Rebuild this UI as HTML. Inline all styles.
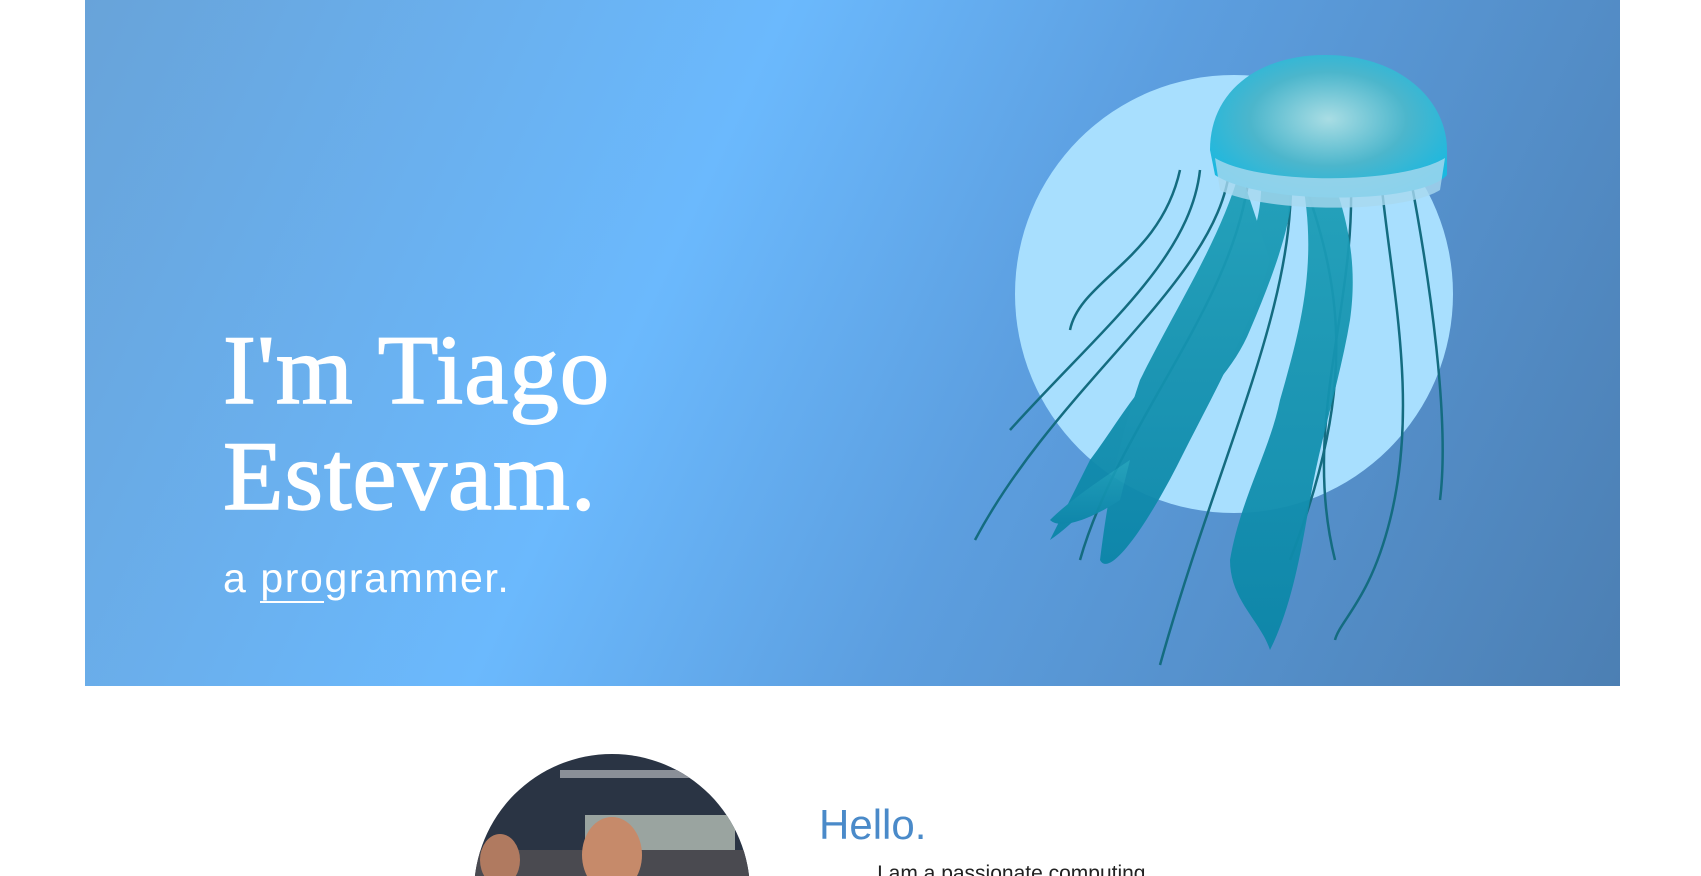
<!DOCTYPE html>
<html><head><meta charset="utf-8"><style>
html,body{margin:0;padding:0;background:#fff;width:1701px;height:876px;overflow:hidden;position:relative}
.hero{position:absolute;left:85px;top:0;width:1535px;height:686px;
background:linear-gradient(115deg,#68a3d9 0%,#6bb9fd 38%,#5c9edf 60%,#4c7fb3 100%)}
.t{position:absolute;left:223px;top:318px;color:#fff;font-family:"Liberation Serif",serif;font-size:99px;line-height:106px;margin:0;font-weight:normal;letter-spacing:1px;-webkit-text-stroke:1.5px #fff}
.s{position:absolute;left:223px;top:555px;color:#fff;font-family:"Liberation Sans",sans-serif;font-size:41px;letter-spacing:1.6px}
.s u{text-decoration:none;border-bottom:2px solid #fff}
.h{position:absolute;left:819px;top:801px;color:#4a8ac9;font-family:"Liberation Sans",sans-serif;font-size:42px}
.p{position:absolute;left:877px;top:862px;color:#222;font-family:"Liberation Sans",sans-serif;font-size:21px}
svg{position:absolute;left:0;top:0}
</style></head><body>
<div class="hero"></div>
<svg width="1701" height="876">
<defs>
<radialGradient id="bell" cx="50%" cy="45%" r="60%"><stop offset="0" stop-color="#a9dde4"/><stop offset="0.55" stop-color="#4cb6cc"/><stop offset="1" stop-color="#1ab8e0"/></radialGradient>
<linearGradient id="arm" x1="0" y1="0" x2="0" y2="1"><stop offset="0" stop-color="#1e9fb8"/><stop offset="1" stop-color="#0c86a8"/></linearGradient>
<clipPath id="pc"><circle cx="612" cy="892" r="138"/></clipPath>
</defs>
<circle cx="1234" cy="294" r="219" fill="#a8dffe"/>
<g fill="none" stroke="#146c80" stroke-width="2.5">
<path d="M1180 170 C1160 260 1080 280 1070 330"/>
<path d="M1200 170 C1190 260 1100 330 1010 430"/>
<path d="M1230 165 C1220 280 1060 380 975 540"/>
<path d="M1250 165 C1240 300 1120 420 1080 560"/>
<path d="M1290 160 C1300 300 1220 450 1160 665"/>
<path d="M1350 165 C1360 300 1300 420 1335 560"/>
<path d="M1380 170 C1390 280 1420 400 1390 520 C1370 600 1340 620 1335 640"/>
<path d="M1410 175 C1430 280 1450 420 1440 500"/>
<path d="M1300 170 C1340 280 1360 380 1290 560"/>
</g>
<g fill="url(#arm)" opacity="0.95">
<path d="M1260 160 C1270 250 1220 290 1180 350 C1140 380 1120 420 1090 460 C1070 500 1060 520 1050 540 C1080 520 1110 480 1140 460 C1180 420 1230 380 1250 330 C1280 260 1300 200 1290 160Z"/>
<path d="M1300 170 C1320 260 1300 330 1280 400 C1270 450 1240 500 1230 560 C1230 600 1260 620 1270 650 C1290 610 1300 560 1310 500 C1320 440 1340 380 1350 320 C1360 250 1340 200 1330 170Z"/>
<path d="M1240 170 C1220 240 1180 300 1140 380 C1120 440 1110 480 1100 560 C1110 580 1150 520 1180 460 C1210 400 1250 330 1270 260 Z"/>
<path d="M1130 460 C1100 480 1070 500 1050 520 C1060 530 1090 520 1120 500Z"/>
</g>
<path d="M1210 150 C1210 90 1260 55 1325 55 C1400 55 1447 100 1447 150 L1447 175 C1420 205 1260 205 1215 175Z" fill="url(#bell)"/>
<path d="M1215 158 C1260 185 1400 185 1445 158 L1440 190 C1400 215 1260 212 1220 190Z" fill="#a8d8ef" opacity="0.8"/>
<g clip-path="url(#pc)">
<rect x="470" y="750" width="290" height="130" fill="#2a3444"/>
<rect x="560" y="770" width="140" height="8" fill="#8a8f98"/>
<rect x="585" y="815" width="150" height="60" fill="#9aa4a0"/>
<rect x="470" y="850" width="290" height="40" fill="#4a4a50"/>
<ellipse cx="612" cy="855" rx="30" ry="38" fill="#c68a6a"/>
<ellipse cx="500" cy="860" rx="20" ry="26" fill="#b07a60"/>
</g>
</svg>
<h1 class="t">I'm Tiago<br>Estevam.</h1>
<div class="s">a <u>pro</u>grammer.</div>
<div class="h">Hello.</div>
<div class="p">I am a passionate computing</div>
</body></html>
